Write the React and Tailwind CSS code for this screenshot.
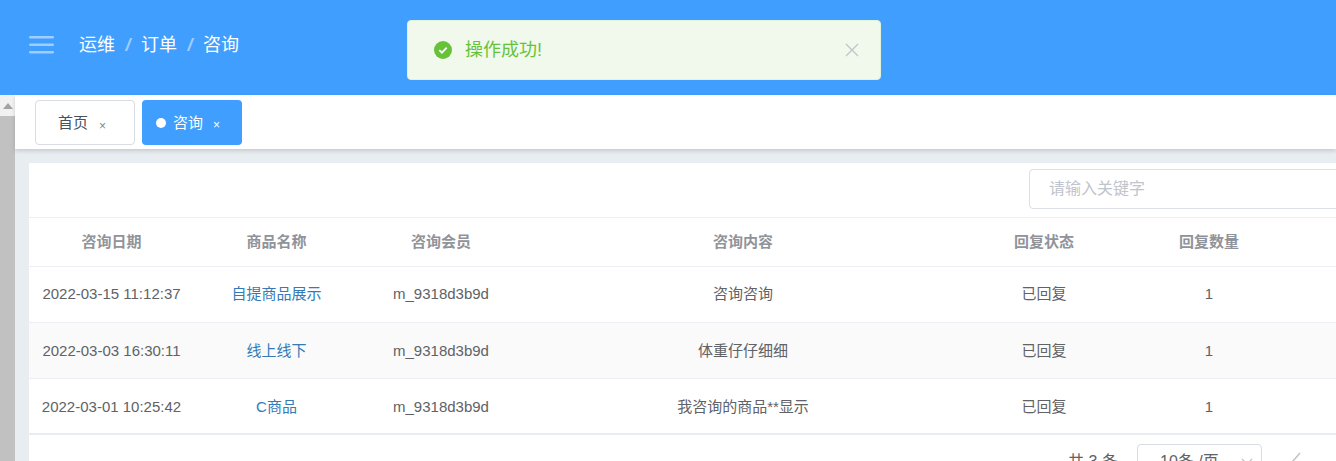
import React from "react";

const rows = [
  ["2022-03-15 11:12:37", "自提商品展示", "m_9318d3b9d", "咨询咨询", "已回复", "1"],
  ["2022-03-03 16:30:11", "线上线下", "m_9318d3b9d", "体重仔仔细细", "已回复", "1"],
  ["2022-03-01 10:25:42", "C商品", "m_9318d3b9d", "我咨询的商品**显示", "已回复", "1"],
];
const heads = ["咨询日期", "商品名称", "咨询会员", "咨询内容", "回复状态", "回复数量"];
const cols = "grid grid-cols-[165px_165px_164px_440px_162px_168px]";

export default function App() {
  return (
    <div className="relative w-[1336px] h-[461px] overflow-hidden bg-white text-[15px] font-['Liberation_Sans','Noto_Sans_CJK_SC',sans-serif]">
      <header className="h-[95px] bg-[#409eff] flex items-center pl-[29px] pb-[5px]">
        <svg width="26" height="20" viewBox="0 0 26 20" className="mr-[24px]">
          <g fill="#fff" fillOpacity="0.5">
            <rect x="0" y="1" width="25" height="2.5" rx="1.2" />
            <rect x="0" y="8.5" width="25" height="2.5" rx="1.2" />
            <rect x="0" y="16" width="25" height="2.5" rx="1.2" />
          </g>
        </svg>
        <nav className="flex items-center text-[18px] text-white">
          <span>运维</span>
          <span className="mx-[10.5px] text-white/50 italic font-bold">/</span>
          <span>订单</span>
          <span className="mx-[10.5px] text-white/50 italic font-bold">/</span>
          <span>咨询</span>
        </nav>
      </header>

      <div className="absolute left-[407px] top-[20px] w-[474px] h-[60px] rounded-[4px] bg-[#f0f9eb] border border-[#e1f3d8] flex items-center pl-[25px] pr-[20px]">
        <svg width="20" height="20" viewBox="0 0 20 20" className="mr-[12px] shrink-0">
          <circle cx="10" cy="10" r="9" fill="#67c23a" />
          <path d="M6.3 10.2l2.6 2.5 4.8-5" fill="none" stroke="#fff" strokeWidth="1.7" />
        </svg>
        <span className="text-[18px] text-[#67c23a] flex-1">操作成功!</span>
        <svg width="16" height="16" viewBox="0 0 16 16" className="shrink-0">
          <path d="M2 2l12 12M14 2L2 14" stroke="#c0c4cc" strokeWidth="1.3" fill="none" />
        </svg>
      </div>

      <div className="flex h-[366px]">
        <aside className="w-[15px] shrink-0 bg-[#f1f1f1] flex flex-col">
          <div className="h-[21px] flex items-center justify-center">
            <svg width="10" height="6" viewBox="0 0 10 6"><path d="M5 0l5 6H0z" fill="#a3a3a3" /></svg>
          </div>
          <div className="flex-1 bg-[#c1c1c1]" />
        </aside>

        <main className="flex-1 min-w-0 bg-[#e8edf1]">
          <div className="h-[54px] bg-white shadow-[0_2px_4px_rgba(0,0,0,0.15)] flex items-start gap-[7px] pt-[5px] pl-[20px] relative">
            <div className="w-[100px] h-[45px] pt-[2px] rounded-[4px] border border-[#d8dce5] bg-white flex items-center pl-[22px] text-[#495060]">
              <span>首页</span>
              <span className="ml-[11px] mt-[4px] text-[12px] text-[#808695]">×</span>
            </div>
            <div className="w-[100px] h-[45px] pt-[1px] rounded-[4px] bg-[#409eff] flex items-center pl-[14px] text-white">
              <span className="w-[10px] h-[10px] rounded-full bg-white mr-[7px]" />
              <span>咨询</span>
              <span className="ml-[10px] mt-[4px] text-[12px]">×</span>
            </div>
          </div>

          <section className="ml-[14px] mt-[14px] bg-white h-[312px] w-[1320px]">
            <div className="h-[55px] border-b border-[#ebeef5] flex items-start pt-[6px] pl-[1000px]">
              <div className="w-[320px] h-[40px] shrink-0 rounded-[4px] border border-[#dcdfe6] flex items-center pl-[19px] text-[16px] text-[#c0c4cc]">
                请输入关键字
              </div>
            </div>
            <div className={`${cols} h-[49px] border-b border-[#ebeef5] items-center text-center font-bold text-[#909399]`}>
              {heads.map((h) => <div key={h}>{h}</div>)}
            </div>
            {rows.map((r, i) => (
              <div key={i} className={`${cols} h-[56px] items-center text-center text-[#606266] ${i === 1 ? "pt-[1px] bg-[#fafafa]" : ""} ${i === 2 ? "pt-[2px] border-b-2 border-[#e8edf1]" : "border-b border-[#ebeef5]"}`}>
                {r.map((c, j) => (
                  <div key={j} className={j === 1 ? "text-[#337ab7]" : ""}>{c}</div>
                ))}
              </div>
            ))}
            <div className="flex items-start mt-[9px] text-[#606266] text-[16px]">
              <span className="ml-[1039px] mr-[19px] mt-[6px] w-[50px] whitespace-nowrap">共 3 条</span>
              <div className="w-[125px] h-[36px] shrink-0 rounded-[4px] border border-[#d8dce5] flex items-center pl-[22px] pr-[8px] justify-between">
                <span className="whitespace-nowrap">10条 /页</span>
                <svg width="12" height="8" viewBox="0 0 12 8"><path d="M1 1l5 5 5-5" fill="none" stroke="#c0c4cc" strokeWidth="1.3" /></svg>
              </div>
              <svg width="12" height="20" viewBox="0 0 12 20" className="ml-[28px] mt-[7px] shrink-0"><path d="M10 2L3 10l7 8" fill="none" stroke="#c0c4cc" strokeWidth="1.6" /></svg>
            </div>
          </section>
        </main>
      </div>
    </div>
  );
}
